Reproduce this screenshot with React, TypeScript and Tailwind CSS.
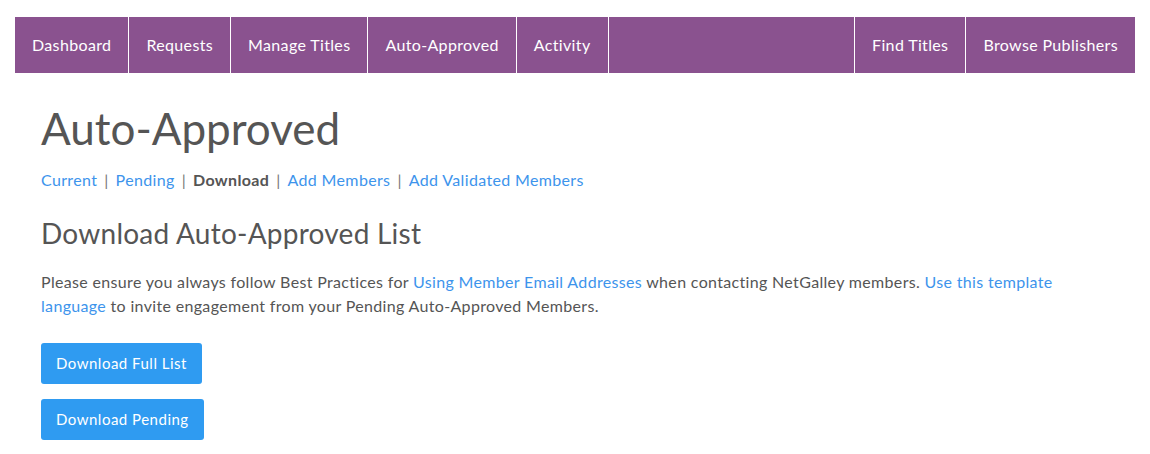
import React from 'react';

const NAV_LEFT = ['Dashboard', 'Requests', 'Manage Titles', 'Auto-Approved', 'Activity'];
const NAV_RIGHT = ['Find Titles', 'Browse Publishers'];

const SUB_NAV = [
  { label: 'Current', active: false },
  { label: 'Pending', active: false },
  { label: 'Download', active: true },
  { label: 'Add Members', active: false },
  { label: 'Add Validated Members', active: false },
];

export default function App() {
  return (
    <div className="w-[1150px] h-[454px] bg-white text-[#555] font-['Lato','Liberation_Sans',sans-serif] pt-[17px] px-[15px]">
      {/* Top nav */}
      <nav className="flex h-[56px] bg-[#8a528f] text-white text-[16px] tracking-[0.35px]">
        {NAV_LEFT.map((item) => (
          <a key={item} className="flex items-center px-[17px] border-r border-white">
            {item}
          </a>
        ))}
        <div className="flex-1" />
        {NAV_RIGHT.map((item) => (
          <a key={item} className="flex items-center px-[17px] border-l border-white">
            {item}
          </a>
        ))}
      </nav>

      <main className="px-[26px]">
        <h1 className="text-[44px] leading-none mt-[33px]">Auto-Approved</h1>

        {/* Sub nav */}
        <div className="flex items-center mt-[18px] text-[16px] tracking-[0.35px]">
          {SUB_NAV.map((item, i) => (
            <React.Fragment key={item.label}>
              {i > 0 && <span className="mx-[7px] text-[#777]">|</span>}
              {item.active ? (
                <span className="font-bold text-[#555]">{item.label}</span>
              ) : (
                <a className="text-[#3d94ec]">{item.label}</a>
              )}
            </React.Fragment>
          ))}
        </div>

        <h2 className="text-[28px] leading-none mt-[27px] tracking-[0.25px]">Download Auto-Approved List</h2>

        <p className="text-[16px] leading-[24px] mt-[23px] max-w-[1040px] tracking-[0.33px]">
          Please ensure you always follow Best Practices for{' '}
          <a className="text-[#3d94ec]">Using Member Email Addresses</a> when contacting NetGalley members.{' '}
          <a className="text-[#3d94ec]">Use this template language</a> to invite engagement from your Pending
          Auto-Approved Members.
        </p>

        <div className="flex flex-col items-start gap-[15px] mt-[25px]">
          <button className="h-[41px] px-[15px] rounded-[3px] bg-[#2f9bf1] text-white text-[15px] tracking-[0.5px]">
            Download Full List
          </button>
          <button className="h-[41px] px-[15px] rounded-[3px] bg-[#2f9bf1] text-white text-[15px] tracking-[0.5px]">
            Download Pending
          </button>
        </div>
      </main>
    </div>
  );
}
